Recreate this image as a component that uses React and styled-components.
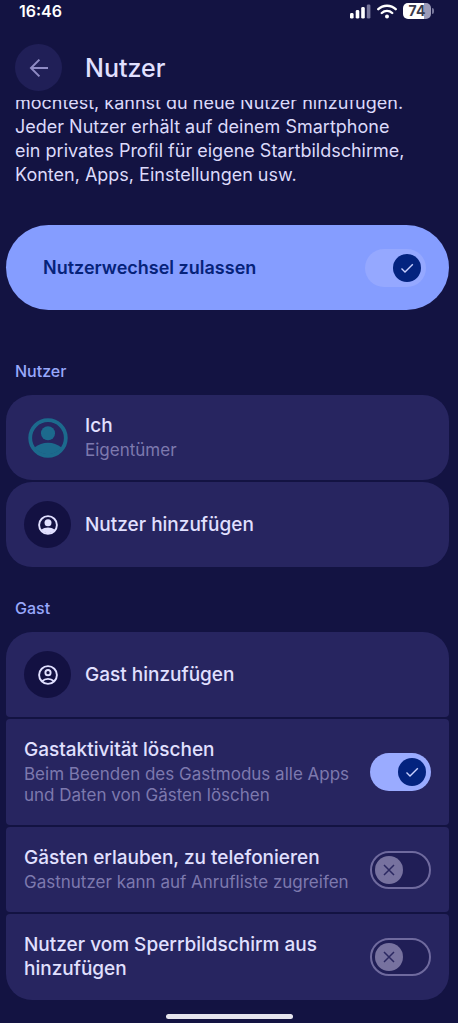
import { useState } from "react";
import styled, { createGlobalStyle, css } from "styled-components";

const App = () => {
  const [settings, setSettings] = useState({
    switching: true,
    clearGuest: true,
    guestCalls: false,
    lockscreen: false,
  });

  const toggle = (key) => () =>
    setSettings((prev) => ({ ...prev, [key]: !prev[key] }));

  return (
    <>
      <GlobalStyle />
      <Screen>
        <StatusBar>
          <time>16:46</time>
          <StatusIcons>
            <SignalIcon />
            <WifiIcon />
            <Battery>
              <BatteryLevel>74</BatteryLevel>
              <BatteryCap />
            </Battery>
          </StatusIcons>
        </StatusBar>

        <Header>
          <BackButton type="button" aria-label="Zurück">
            <BackIcon />
          </BackButton>
          <h1>Nutzer</h1>
        </Header>

        <Content>
          <Intro>
            möchtest, kannst du neue Nutzer hinzufügen. Jeder Nutzer erhält auf
            deinem Smartphone ein privates Profil für eigene Startbildschirme,
            Konten, Apps, Einstellungen usw.
          </Intro>

          <Banner>
            <BannerTitle>Nutzerwechsel zulassen</BannerTitle>
            <Switch
              $soft
              checked={settings.switching}
              onChange={toggle("switching")}
            />
          </Banner>

          <SectionTitle>Nutzer</SectionTitle>
          <List>
            <Row as="button" type="button" $round="all">
              <Avatar>
                <AccountIcon size={40} color="#1c6a8d" />
              </Avatar>
              <RowText>
                <RowTitle>Ich</RowTitle>
                <RowSub>Eigentümer</RowSub>
              </RowText>
            </Row>
            <Row as="button" type="button" $round="all">
              <Avatar $filled>
                <AccountIcon size={20} color="#e1e0ff" />
              </Avatar>
              <RowTitle>Nutzer hinzufügen</RowTitle>
            </Row>
          </List>

          <SectionTitle>Gast</SectionTitle>
          <List>
            <Row as="button" type="button" $round="top">
              <Avatar $filled>
                <GuestIcon size={20} color="#e1e0ff" />
              </Avatar>
              <RowTitle>Gast hinzufügen</RowTitle>
            </Row>
            <Row as="label">
              <RowText>
                <RowTitle>Gastaktivität löschen</RowTitle>
                <RowSub>
                  Beim Beenden des Gastmodus alle Apps und Daten von Gästen
                  löschen
                </RowSub>
              </RowText>
              <Switch
                checked={settings.clearGuest}
                onChange={toggle("clearGuest")}
              />
            </Row>
            <Row as="label">
              <RowText>
                <RowTitle>Gästen erlauben, zu telefonieren</RowTitle>
                <RowSub>Gastnutzer kann auf Anrufliste zugreifen</RowSub>
              </RowText>
              <Switch
                checked={settings.guestCalls}
                onChange={toggle("guestCalls")}
              />
            </Row>
            <Row as="label" $round="bottom">
              <RowText>
                <RowTitle>Nutzer vom Sperrbildschirm aus hinzufügen</RowTitle>
              </RowText>
              <Switch
                checked={settings.lockscreen}
                onChange={toggle("lockscreen")}
              />
            </Row>
          </List>
        </Content>

        <HomeBar />
      </Screen>
    </>
  );
};

const Switch = ({ checked, onChange, $soft }) => (
  <SwitchBox>
    <SwitchInput
      type="checkbox"
      role="switch"
      checked={checked}
      onChange={onChange}
      $soft={$soft}
    />
    <Knob $on={checked}>
      <svg width="16" height="16" viewBox="0 0 16 16" fill="none">
        {checked ? (
          <path d="M2.5 8.6 6 12 13.8 4.2" stroke="#c9d0ff" strokeWidth="1.4" />
        ) : (
          <path
            d="M3 3 13 13M13 3 3 13"
            stroke="#2b2861"
            strokeWidth="1.5"
          />
        )}
      </svg>
    </Knob>
  </SwitchBox>
);

const AccountIcon = ({ size, color }) => (
  <svg width={size} height={size} viewBox="0 0 40 40" fill={color}>
    <circle cx="20" cy="20" r="17.8" fill="none" stroke={color} strokeWidth="3.8" />
    <circle cx="20" cy="15.3" r="7" />
    <path d="M6.5 29.5C10.5 26.4 15 24.8 20 24.8S29.5 26.4 33.5 29.5A17 17 0 0 1 6.5 29.5Z" />
  </svg>
);

const GuestIcon = ({ size, color }) => (
  <svg
    width={size}
    height={size}
    viewBox="0 0 40 40"
    fill="none"
    stroke={color}
    strokeWidth="3.8"
  >
    <circle cx="20" cy="20" r="17.8" />
    <circle cx="20" cy="15.3" r="5.2" />
    <path d="M8 32.4C11.5 29.4 15.5 27.8 20 27.8S28.5 29.4 32 32.4" />
  </svg>
);

const BackIcon = () => (
  <svg
    width="20"
    height="20"
    viewBox="0 0 20 20"
    fill="none"
    stroke="#8f8bc4"
    strokeWidth="2"
  >
    <path d="M19 10H2.4M10.4 1.6 2 10l8.4 8.4" />
  </svg>
);

const SignalIcon = () => (
  <svg width="21" height="15" viewBox="0 0 21 15" fill="#fff">
    <rect x="0" y="9" width="3.6" height="5.6" rx="1.4" />
    <rect x="5.7" y="6" width="3.6" height="8.6" rx="1.4" />
    <rect x="11.2" y="3" width="3.6" height="11.6" rx="1.4" />
    <rect x="16.8" y="0.4" width="3.6" height="14.2" rx="1.4" fill="#77769b" />
  </svg>
);

const WifiIcon = () => (
  <svg width="20" height="15" viewBox="0 0 20 15" fill="none" stroke="#fff">
    <path
      d="M1.3 5.2C6 .6 14 .6 18.7 5.2M4.8 9C7.6 6.2 12.4 6.2 15.2 9"
      strokeWidth="2.4"
      strokeLinecap="round"
    />
    <circle cx="10" cy="12.5" r="2" fill="#fff" stroke="none" />
  </svg>
);

const GlobalStyle = createGlobalStyle`
  * {
    box-sizing: border-box;
  }

  body {
    margin: 0;
    background: #131342;
    color: #e1e0ff;
    font-family: Inter, "Liberation Sans", sans-serif;
  }

  h1, h2, p {
    margin: 0;
  }

  button {
    border: none;
    font: inherit;
    color: inherit;
    text-align: left;
  }
`;

const Screen = styled.div`
  display: flex;
  flex-direction: column;
  min-height: 100vh;
`;

const StatusBar = styled.div`
  display: flex;
  align-items: center;
  justify-content: space-between;
  height: 22px;
  padding: 0 24px 0 19px;
  color: #fff;
  font-size: 16px;
  font-weight: 600;
`;

const StatusIcons = styled.div`
  display: flex;
  align-items: center;
  gap: 6px;
`;

const Battery = styled.div`
  display: flex;
  align-items: center;
  gap: 1px;
`;

const BatteryLevel = styled.span`
  width: 28px;
  border-radius: 5px;
  background: linear-gradient(to right, #fff 74%, #9c9bb8 74%);
  color: #3b3b4d;
  font-size: 14px;
  line-height: 16px;
  font-weight: 700;
  text-align: center;
`;

const BatteryCap = styled.span`
  width: 2px;
  height: 6px;
  border-radius: 0 2px 2px 0;
  background: #77769b;
`;

const Header = styled.header`
  display: flex;
  align-items: center;
  gap: 23px;
  padding: 22px 15px 9px;

  h1 {
    font-size: 25px;
    line-height: 32px;
    font-weight: 500;
  }
`;

const BackButton = styled.button`
  display: grid;
  place-items: center;
  width: 47px;
  height: 47px;
  padding: 0;
  border-radius: 50%;
  background: #201f57;
`;

const Content = styled.main`
  flex: 1;
  overflow: hidden;
  padding: 0 9px 0 6px;
`;

/* the first line is already scrolled halfway under the header */
const Intro = styled.p`
  margin-top: -9px;
  padding: 0 32px 0 9px;
  color: #dcdafa;
  font-size: 18px;
  line-height: 24px;
`;

const Banner = styled.label`
  display: flex;
  align-items: center;
  justify-content: space-between;
  min-height: 85px;
  margin: 38px 0 48px;
  padding: 0 23px 0 37px;
  border-radius: 43px;
  background: #859dff;
`;

const BannerTitle = styled.span`
  color: #06237a;
  font-size: 18px;
  line-height: 24px;
  font-weight: 600;
`;

const SectionTitle = styled.h2`
  padding: 3px 9px 14px;
  color: #98a8fb;
  font-size: 16px;
  line-height: 20px;
  font-weight: 500;
`;

const List = styled.div`
  display: flex;
  flex-direction: column;
  gap: 2px;
  margin-bottom: 28px;

  &:last-child {
    margin-bottom: 0;
  }
`;

const corners = {
  all: "26px",
  top: "26px 26px 4px 4px",
  bottom: "4px 4px 26px 26px",
};

const Row = styled.div`
  display: flex;
  align-items: center;
  gap: 14px;
  width: 100%;
  min-height: 85px;
  padding: 19px 18px;
  border-radius: ${({ $round }) => corners[$round] || "4px"};
  background: #272560;
`;

const Avatar = styled.span`
  display: grid;
  place-items: center;
  flex: none;
  width: 47px;
  height: 47px;
  border-radius: 50%;
  background: ${({ $filled }) => ($filled ? "#131142" : "none")};
`;

const RowText = styled.span`
  display: flex;
  flex: 1;
  flex-direction: column;
  gap: 2px;
`;

const RowTitle = styled.span`
  color: #e1e0ff;
  font-size: 19px;
  line-height: 24px;
  font-weight: 500;
`;

const RowSub = styled.span`
  color: #7d79ae;
  font-size: 17px;
  line-height: 21px;
`;

const SwitchBox = styled.span`
  display: grid;
  flex: none;
  align-items: center;
  width: 61px;
  height: 38px;

  > * {
    grid-area: 1 / 1;
  }
`;

const SwitchInput = styled.input`
  appearance: none;
  width: 100%;
  height: 100%;
  margin: 0;
  border: 2px solid #6f6a9e;
  border-radius: 19px;
  background: #201e56;

  &:checked {
    border: none;
    background: ${({ $soft }) => ($soft ? "#95a8ff" : "#9aabff")};
  }
`;

const Knob = styled.span`
  display: grid;
  place-items: center;
  width: 28px;
  height: 28px;
  margin: 0 5px;
  border-radius: 50%;
  background: #77729f;
  pointer-events: none;

  ${({ $on }) =>
    $on &&
    css`
      justify-self: end;
      background: #03237f;
    `}
`;

const HomeBar = styled.div`
  width: 127px;
  height: 5px;
  margin: 14px auto 4px;
  border-radius: 3px;
  background: #e6e5ee;
`;

export default App;
